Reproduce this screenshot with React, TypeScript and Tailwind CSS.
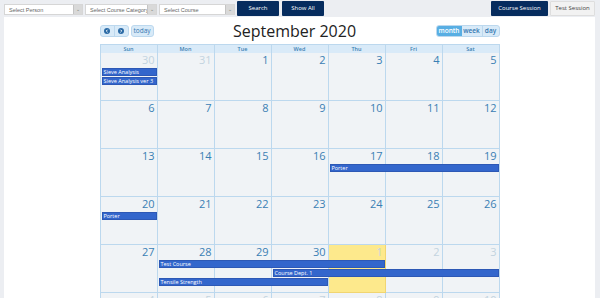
const font = { fontFamily: '"Open Sans", "Liberation Sans", sans-serif' };

type Ev = { title: string; week: number; start: number; end: number; slot: number };

const events: Ev[] = [
  { title: "Sieve Analysis", week: 0, start: 0, end: 1, slot: 0 },
  { title: "Sieve Analysis ver 3", week: 0, start: 0, end: 1, slot: 1 },
  { title: "Porter", week: 2, start: 4, end: 7, slot: 0 },
  { title: "Porter", week: 3, start: 0, end: 1, slot: 0 },
  { title: "Test Course", week: 4, start: 1, end: 5, slot: 0 },
  { title: "Course Dept. 1", week: 4, start: 3, end: 7, slot: 1 },
  { title: "Tensile Strength", week: 4, start: 1, end: 4, slot: 2 },
];

const weeks: { n: number; other: boolean; today?: boolean }[][] = [
  [30, 31, 1, 2, 3, 4, 5].map((n, i) => ({ n, other: i < 2 })),
  [6, 7, 8, 9, 10, 11, 12].map((n) => ({ n, other: false })),
  [13, 14, 15, 16, 17, 18, 19].map((n) => ({ n, other: false })),
  [20, 21, 22, 23, 24, 25, 26].map((n) => ({ n, other: false })),
  [27, 28, 29, 30, 1, 2, 3].map((n, i) => ({ n, other: i > 3, today: i === 4 })),
  [4, 5, 6, 7, 8, 9, 10].map((n) => ({ n, other: true })),
];

const days = ["Sun", "Mon", "Tue", "Wed", "Thu", "Fri", "Sat"];

function SelectBox({ label, width }: { label: string; width: string }) {
  return (
    <div className={`${width} h-[11px] mt-[4px] flex bg-white border border-[#d6d6d6]`}>
      <span className="flex-1 pl-[4px] font-['Liberation_Sans',sans-serif] text-[5.5px] leading-[10px] text-[#666] whitespace-nowrap overflow-hidden">
        {label}
      </span>
      <span className="w-[9px] bg-[#d9d9d9] border-l border-[#c4c4c4] text-[5px] leading-[9px] text-center text-[#777]">
        ⌄
      </span>
    </div>
  );
}

function Chevron({ dir }: { dir: "l" | "r" }) {
  return (
    <svg width="6" height="6" viewBox="0 0 10 10">
      <circle cx="5" cy="5" r="5" fill="#2a6aa5" />
      <path
        d={dir === "l" ? "M6 2.8 L3.8 5 L6 7.2" : "M4 2.8 L6.2 5 L4 7.2"}
        stroke="#fff"
        strokeWidth="1.6"
        fill="none"
      />
    </svg>
  );
}

export default function App() {
  return (
    <div className="w-[600px] h-[298px] overflow-hidden bg-[#eceef2]" style={font}>
      <div className="flex items-start h-[17px] pl-[4px] pr-[5px]">
        <SelectBox label="Select Person" width="w-[79px]" />
        <div className="w-[2px]" />
        <SelectBox label="Select Course Category" width="w-[72px]" />
        <div className="w-[2px]" />
        <SelectBox label="Select Course" width="w-[76px]" />
        <button className="ml-[2px] mt-px w-[42px] h-[15px] bg-[#062c5e] text-white text-[6px] rounded-[1px]">
          Search
        </button>
        <button className="ml-[3px] mt-px w-[42px] h-[15px] bg-[#062c5e] text-white text-[6px] rounded-[1px]">
          Show All
        </button>
        <div className="flex-1" />
        <button className="mt-px w-[57px] h-[15px] bg-[#062c5e] text-white text-[6px] rounded-[1px]">
          Course Session
        </button>
        <button className="ml-[2px] mt-px w-[45px] h-[15px] bg-[#f2f2f2] border border-[#dedede] text-[#444] text-[6px] rounded-[1px]">
          Test Session
        </button>
      </div>

      <div className="ml-[4px] mr-[5px] h-[281px] bg-white pt-[8px]">
        <div className="w-[400px] mx-auto">
          <div className="flex items-start h-[19px]">
            <div className="flex h-[12px] rounded-[3px] border border-[#bcd8ee] bg-[#d8eaf8] overflow-hidden">
              <span className="w-[14px] flex items-center justify-center border-r border-[#bcd8ee]">
                <Chevron dir="l" />
              </span>
              <span className="w-[13px] flex items-center justify-center">
                <Chevron dir="r" />
              </span>
            </div>
            <div className="ml-[2px] h-[12px] w-[23px] rounded-[3px] border border-[#bcd8ee] bg-[#d8eaf8] text-[6.5px] leading-[10px] text-center text-[#3577b0]">
              today
            </div>
            <div className="flex-1 text-center text-[16px] leading-[15px] text-[#222] -mt-px">September 2020</div>
            <div className="flex h-[12px] rounded-[3px] border border-[#bcd8ee] bg-[#d8eaf8] overflow-hidden text-[6.5px] leading-[10px] font-semibold">
              <span className="w-[25px] text-center bg-[#58aee3] text-white">month</span>
              <span className="w-[21px] text-center text-[#3577b0] border-r border-[#bcd8ee]">week</span>
              <span className="w-[16px] text-center text-[#3577b0]">day</span>
            </div>
          </div>

          <div className="grid grid-cols-7 h-[9px] bg-[#d9eaf8] border-l border-t border-[#bcd8ee]">
            {days.map((d) => (
              <div key={d} className="border-r border-b border-[#bcd8ee] text-[5.5px] leading-[8px] text-center font-semibold text-[#3a7fb3]">
                {d}
              </div>
            ))}
          </div>

          {weeks.map((w, wi) => (
            <div key={wi} className="grid grid-cols-7 grid-rows-[14px_8px_8px_8px_1fr] gap-y-px h-[48px] border-l border-[#bcd8ee]">
              {w.map((c, ci) => (
                <div
                  key={ci}
                  style={{ gridColumn: ci + 1 }}
                  className={`row-span-full border-r border-b ${
                    c.today ? "bg-[#fde98c] border-[#f1d571]" : "bg-[#f0f3f6] border-[#bcd8ee]"
                  } text-right pr-[2px] pt-px text-[11px] leading-[12px] ${c.other ? "text-[#c3d3df]" : "text-[#3a80b4]"}`}
                >
                  {c.n}
                </div>
              ))}
              {events
                .filter((e) => e.week === wi)
                .map((e, ei) => (
                  <div
                    key={ei}
                    style={{ gridColumn: `${e.start + 1} / ${e.end + 1}`, gridRow: e.slot + 2 }}
                    className="mx-px h-[8px] bg-[#3366cc] border border-[#2d58b5] text-white text-[5.5px] leading-[6px] pl-px whitespace-nowrap overflow-hidden"
                  >
                    {e.title}
                  </div>
                ))}
            </div>
          ))}
        </div>
      </div>
    </div>
  );
}
